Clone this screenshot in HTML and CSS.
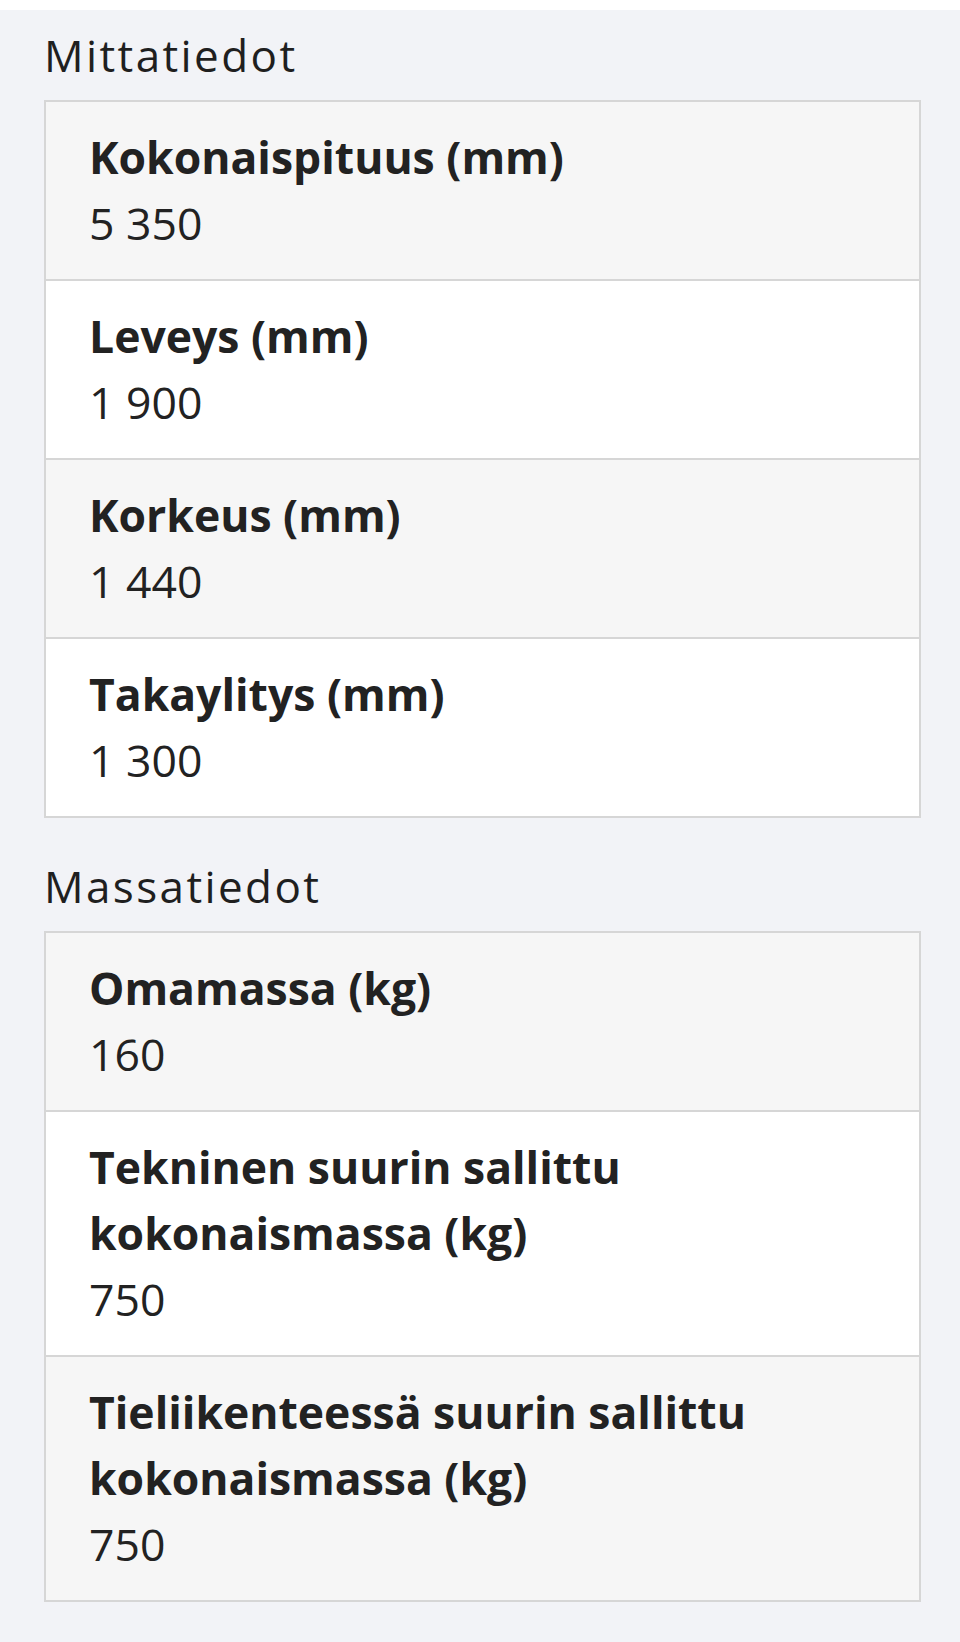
FILE: index.html
```html
<!DOCTYPE html>
<html lang="fi">
<head>
  <meta charset="UTF-8" />
  <meta name="viewport" content="width=device-width, initial-scale=1" />
  <title>Ajoneuvon tiedot</title>
  <link rel="stylesheet" href="styles.css">
</head>
<body>
  <div class="page">
    <!-- Mittatiedot -->
    <h2 class="section-title">Mittatiedot</h2>
    <div class="spec-list">
      <div class="spec-row">
        <div class="spec-label">Kokonaispituus (mm)</div>
        <div class="spec-value">5 350</div>
      </div>
      <div class="spec-row">
        <div class="spec-label">Leveys (mm)</div>
        <div class="spec-value">1 900</div>
      </div>
      <div class="spec-row">
        <div class="spec-label">Korkeus (mm)</div>
        <div class="spec-value">1 440</div>
      </div>
      <div class="spec-row">
        <div class="spec-label">Takaylitys (mm)</div>
        <div class="spec-value">1 300</div>
      </div>
    </div>

    <!-- Massatiedot -->
    <h2 class="section-title">Massatiedot</h2>
    <div class="spec-list">
      <div class="spec-row">
        <div class="spec-label">Omamassa (kg)</div>
        <div class="spec-value">160</div>
      </div>
      <div class="spec-row">
        <div class="spec-label">Tekninen suurin sallittu<br>kokonaismassa (kg)</div>
        <div class="spec-value">750</div>
      </div>
      <div class="spec-row">
        <div class="spec-label">Tieliikenteessä suurin sallittu<br>kokonaismassa (kg)</div>
        <div class="spec-value">750</div>
      </div>
    </div>
  </div>
</body>
</html>
```

FILE: styles.css
```css
* {
  box-sizing: border-box;
}

body {
  margin: 0;
  background: #fff;
  font-family: 'Open Sans', sans-serif;
  color: #222;
}

.page {
  margin-top: 10px;
  min-height: 1632px;
  background: #f2f3f7;
  padding: 17px 39px 39px 44px;
}

.section-title {
  margin: 0 0 17px;
  font-size: 44px;
  font-weight: 400;
  line-height: 56px;
  letter-spacing: 2.4px;
  color: #1f1f1f;
}

.spec-list {
  border: 2px solid #d6d6d6;
  margin-bottom: 40px;
}

.spec-list:last-child {
  margin-bottom: 0;
}

.spec-row {
  padding: 22px 43px 23px;
  background: #f6f6f6;
  border-top: 2px solid #d6d6d6;
}

.spec-row:first-child {
  border-top: none;
}

.spec-row:nth-child(even) {
  background: #fff;
}

.spec-label {
  font-size: 44.5px;
  font-weight: 700;
  line-height: 66px;
}

.spec-value {
  font-size: 44.5px;
  line-height: 66px;
}
```
